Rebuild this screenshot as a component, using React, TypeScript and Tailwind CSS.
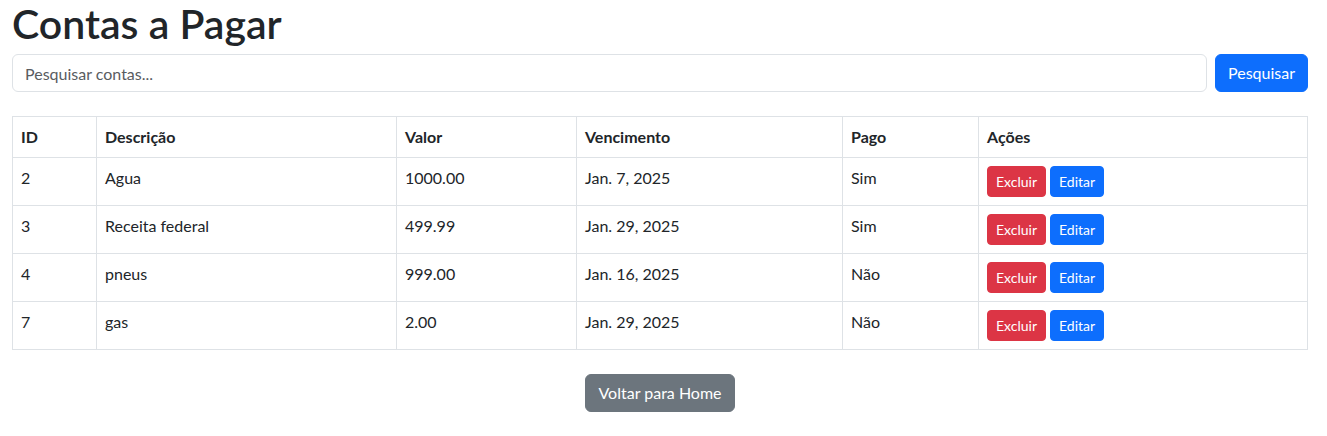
import React from 'react';

interface Conta {
  id: number;
  descricao: string;
  valor: string;
  vencimento: string;
  pago: boolean;
}

const contas: Conta[] = [
  { id: 2, descricao: 'Agua', valor: '1000.00', vencimento: 'Jan. 7, 2025', pago: true },
  { id: 3, descricao: 'Receita federal', valor: '499.99', vencimento: 'Jan. 29, 2025', pago: true },
  { id: 4, descricao: 'pneus', valor: '999.00', vencimento: 'Jan. 16, 2025', pago: false },
  { id: 7, descricao: 'gas', valor: '2.00', vencimento: 'Jan. 29, 2025', pago: false },
];

const th = 'border border-[#dee2e6] px-2 py-2 text-left align-top font-bold leading-6';
const td = 'border border-[#dee2e6] px-2 py-2 text-left align-top leading-6';

const App: React.FC = () => {
  return (
    <div className="min-h-[436px] bg-white pl-3 pr-[19px] text-[16px] text-[#212529] font-['Lato',_'Noto_Sans',_sans-serif]">
      {/* Title */}
      <h1 className="text-[41px] font-semibold leading-[48px] mb-[6px]">Contas a Pagar</h1>

      {/* Search */}
      <form className="flex gap-2" onSubmit={(e) => e.preventDefault()}>
        <input
          type="text"
          placeholder="Pesquisar contas..."
          className="flex-1 h-[38px] px-3 border border-[#dee2e6] rounded-md text-[16px] leading-6 placeholder:text-[#595c5f] outline-none"
        />
        <button
          type="submit"
          className="h-[38px] px-3 rounded-md bg-[#0d6efd] border border-[#0d6efd] text-white leading-6"
        >
          Pesquisar
        </button>
      </form>

      {/* Table */}
      <table className="mt-6 w-full border-collapse table-fixed">
        <colgroup>
          <col className="w-[84px]" />
          <col className="w-[300px]" />
          <col className="w-[180px]" />
          <col className="w-[266px]" />
          <col className="w-[136px]" />
          <col />
        </colgroup>
        <thead>
          <tr>
            <th className={th}>ID</th>
            <th className={th}>Descrição</th>
            <th className={th}>Valor</th>
            <th className={th}>Vencimento</th>
            <th className={th}>Pago</th>
            <th className={th}>Ações</th>
          </tr>
        </thead>
        <tbody>
          {contas.map((c) => (
            <tr key={c.id}>
              <td className={td}>{c.id}</td>
              <td className={td}>{c.descricao}</td>
              <td className={td}>{c.valor}</td>
              <td className={td}>{c.vencimento}</td>
              <td className={td}>{c.pago ? 'Sim' : 'Não'}</td>
              <td className={td}>
                <div className="flex gap-1">
                  <button className="h-[31px] px-2 rounded bg-[#dc3545] border border-[#dc3545] text-white text-[14px] leading-[21px]">
                    Excluir
                  </button>
                  <button className="h-[31px] px-2 rounded bg-[#0d6efd] border border-[#0d6efd] text-white text-[14px] leading-[21px]">
                    Editar
                  </button>
                </div>
              </td>
            </tr>
          ))}
        </tbody>
      </table>

      {/* Back */}
      <div className="flex justify-center mt-6">
        <button className="h-[38px] px-3 rounded-md bg-[#6c757d] border border-[#6c757d] text-white leading-6">
          Voltar para Home
        </button>
      </div>
    </div>
  );
};

export default App;
